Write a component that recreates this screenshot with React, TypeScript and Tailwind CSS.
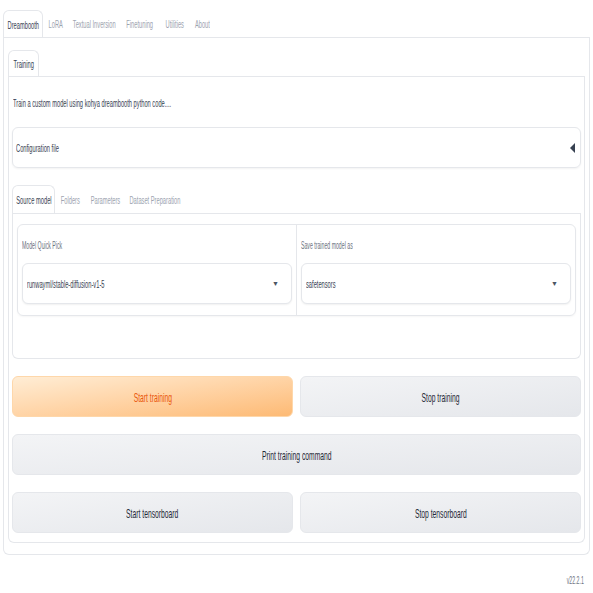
import React from "react"

function Sx({ children, className = "" }: { children: React.ReactNode; className?: string }) {
    return (
        <span className={"inline-block shrink-0 whitespace-nowrap scale-x-[0.52] " + className}>
            {children}
        </span>
    )
}

function Tab({ label, className, active = false }: { label: string; className: string; active?: boolean }) {
    return (
        <div
            className={
                "h-full flex items-center justify-center shrink-0 pt-[2px] " +
                className +
                (active ? " border-x border-t border-[#e5e7eb] rounded-t-[6px] bg-white -mb-px" : "")
            }
        >
            <Sx className={"text-[11px] origin-center " + (active ? "text-[#374151]" : "text-[#9ca3af]")}>
                {label}
            </Sx>
        </div>
    )
}

function Select({ value }: { value: string }) {
    return (
        <div className="h-[41px] border border-[#e5e7eb] rounded-[6px] bg-white shadow-[0_1px_2px_rgba(0,0,0,0.06)] flex items-center justify-between pl-[4px] pr-[12px] pt-[1px]">
            <Sx className="text-[11px] text-[#374151] origin-left">{value}</Sx>
            <span className="text-[7px] text-[#4b5563]">▼</span>
        </div>
    )
}

function Btn({ label, primary = false }: { label: string; primary?: boolean }) {
    return (
        <div
            className={
                "h-[41px] flex-1 rounded-[6px] border flex items-center justify-center pt-[2px] " +
                (primary
                    ? "border-[#fed7aa] bg-gradient-to-br from-[#ffedd5] to-[#fdba74] text-[#ea580c]"
                    : "border-[#e5e7eb] bg-gradient-to-br from-[#f3f4f6] to-[#e5e7eb] text-[#1f2937]")
            }
        >
            <Sx className="text-[13px] origin-center scale-x-[0.5]">{label}</Sx>
        </div>
    )
}

export default function App() {
    return (
        <div className="w-[593px] h-[593px] bg-white font-['Liberation_Sans',sans-serif] overflow-hidden">
            <div className="pt-[10px] px-[3px]">
                {/* top tabs */}
                <div className="h-[28px] flex items-stretch border-b border-[#e5e7eb]">
                    <Tab label="Dreambooth" className="w-[40px]" active />
                    <Tab label="LoRA" className="w-[26px]" />
                    <Tab label="Textual Inversion" className="w-[51px]" />
                    <Tab label="Finetuning" className="w-[40px]" />
                    <Tab label="Utilities" className="w-[29px]" />
                    <Tab label="About" className="w-[27px]" />
                </div>
                <div className="border-x border-b border-[#e5e7eb] rounded-b-[6px] px-[4px] pt-[12px] pb-[11px]">
                    {/* Training tab */}
                    <div className="h-[27px] flex items-stretch border-b border-[#e5e7eb]">
                        <Tab label="Training" className="w-[31px]" active />
                    </div>
                    <div className="border-x border-b border-[#e5e7eb] rounded-b-[6px] px-[3px] pb-[9px]">
                        <div className="h-[50px] flex items-center pl-[1px] pt-[2px]">
                            <Sx className="text-[11px] text-[#374151] origin-left scale-x-[0.49]">
                                Train a custom model using kohya dreambooth python code....
                            </Sx>
                        </div>
                        <div className="h-[41px] border border-[#e5e7eb] rounded-[6px] shadow-[0_1px_2px_rgba(0,0,0,0.05)] flex items-center justify-between pl-[3px] pr-[5px]">
                            <Sx className="text-[11px] text-[#374151] origin-left pt-[2px]">Configuration file</Sx>
                            <svg width="5" height="10" viewBox="0 0 5 10">
                                <path d="M5 0 L0 5 L5 10 Z" fill="#374151" />
                            </svg>
                        </div>

                        {/* sub tabs */}
                        <div className="mt-[17px] h-[29px] flex items-stretch border-b border-[#e5e7eb]">
                            <Tab label="Source model" className="w-[43px]" active />
                            <Tab label="Folders" className="w-[31px]" />
                            <Tab label="Parameters" className="w-[38px]" />
                            <Tab label="Dataset Preparation" className="w-[62px]" />
                        </div>
                        <div className="border-x border-b border-[#e5e7eb] rounded-b-[6px] h-[145px] px-[4px] pt-[10px]">
                            <div className="h-[92px] border border-[#e5e7eb] rounded-[6px] flex shadow-[0_1px_2px_rgba(0,0,0,0.04)]">
                                <div className="flex-1 px-[4px] border-r border-[#e5e7eb]">
                                    <div className="h-[38px] flex items-center pt-[2px]">
                                        <Sx className="text-[10px] text-[#6b7280] origin-left">Model Quick Pick</Sx>
                                    </div>
                                    <Select value="runwayml/stable-diffusion-v1-5" />
                                </div>
                                <div className="flex-1 px-[4px]">
                                    <div className="h-[38px] flex items-center pt-[2px]">
                                        <Sx className="text-[10px] text-[#6b7280] origin-left">Save trained model as</Sx>
                                    </div>
                                    <Select value="safetensors" />
                                </div>
                            </div>
                        </div>

                        {/* buttons */}
                        <div className="mt-[17px] flex flex-col gap-[17px]">
                            <div className="flex gap-[7px]">
                                <Btn label="Start training" primary />
                                <Btn label="Stop training" />
                            </div>
                            <div className="flex">
                                <Btn label="Print training command" />
                            </div>
                            <div className="flex gap-[7px]">
                                <Btn label="Start tensorboard" />
                                <Btn label="Stop tensorboard" />
                            </div>
                        </div>
                    </div>
                </div>
                <div className="flex justify-end pr-[6px] mt-[18px]">
                    <Sx className="text-[10px] text-[#6b7280] origin-right">v22.2.1</Sx>
                </div>
            </div>
        </div>
    )
}
